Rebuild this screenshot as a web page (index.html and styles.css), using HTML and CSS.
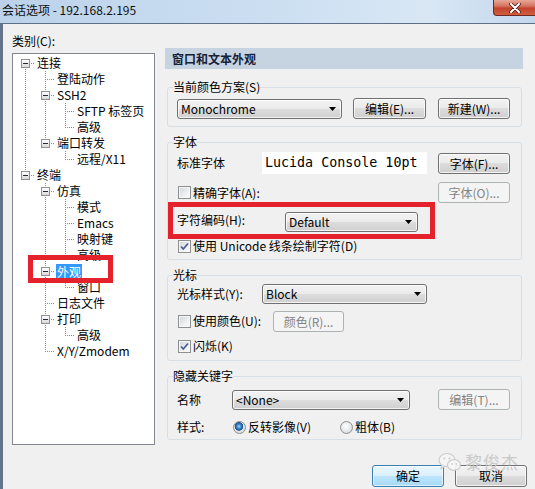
FILE: index.html
```html
<!DOCTYPE html>
<html lang="zh-CN">
<head>
<meta charset="utf-8">
<title>会话选项</title>
<link rel="stylesheet" href="styles.css">
</head>
<body>
<div class="dialog">
  <div class="titlebar">
    <span class="title">会话选项 - 192.168.2.195</span>
    <span class="close"><svg width="12" height="10" viewBox="0 0 12 10"><path d="M2 1 L10 9 M10 1 L2 9" stroke="#4a1e17" stroke-width="3.6" stroke-linecap="round"/><path d="M2 1 L10 9 M10 1 L2 9" stroke="#ffffff" stroke-width="2" stroke-linecap="round"/></svg></span>
  </div>
  <div class="client">
    <div class="main">
      <div class="cats">
        <div class="cats-label">类别(C):</div>
        <div class="tree">
          <div class="row"><span class="g first"><i class="exp"></i></span><span class="lbl">连接</span></div>
          <div class="row"><span class="g pipe"></span><span class="g tee"></span><span class="lbl">登陆动作</span></div>
          <div class="row"><span class="g pipe"></span><span class="g tee"><i class="exp"></i></span><span class="lbl">SSH2</span></div>
          <div class="row"><span class="g pipe"></span><span class="g pipe"></span><span class="g tee"></span><span class="lbl">SFTP 标签页</span></div>
          <div class="row"><span class="g pipe"></span><span class="g pipe"></span><span class="g elbow"></span><span class="lbl">高级</span></div>
          <div class="row"><span class="g pipe"></span><span class="g elbow"><i class="exp"></i></span><span class="lbl">端口转发</span></div>
          <div class="row"><span class="g pipe"></span><span class="g"></span><span class="g elbow"></span><span class="lbl">远程/X11</span></div>
          <div class="row"><span class="g elbow"><i class="exp"></i></span><span class="lbl">终端</span></div>
          <div class="row"><span class="g"></span><span class="g tee"><i class="exp"></i></span><span class="lbl">仿真</span></div>
          <div class="row"><span class="g"></span><span class="g pipe"></span><span class="g tee"></span><span class="lbl">模式</span></div>
          <div class="row"><span class="g"></span><span class="g pipe"></span><span class="g tee"></span><span class="lbl">Emacs</span></div>
          <div class="row"><span class="g"></span><span class="g pipe"></span><span class="g tee"></span><span class="lbl">映射键</span></div>
          <div class="row"><span class="g"></span><span class="g pipe"></span><span class="g elbow"></span><span class="lbl">高级</span></div>
          <div class="row marked"><span class="g"></span><span class="g tee"><i class="exp"></i></span><span class="lbl sel">外观</span><span class="mark"></span></div>
          <div class="row"><span class="g"></span><span class="g pipe"></span><span class="g elbow"></span><span class="lbl">窗口</span></div>
          <div class="row"><span class="g"></span><span class="g tee"></span><span class="lbl">日志文件</span></div>
          <div class="row"><span class="g"></span><span class="g tee"><i class="exp"></i></span><span class="lbl">打印</span></div>
          <div class="row"><span class="g"></span><span class="g pipe"></span><span class="g elbow"></span><span class="lbl">高级</span></div>
          <div class="row"><span class="g"></span><span class="g elbow"></span><span class="lbl">X/Y/Zmodem</span></div>
        </div>
      </div>

      <div class="page">
        <div class="page-head">窗口和文本外观</div>

        <fieldset class="grp g1">
          <legend>当前颜色方案(S)</legend>
          <div class="gb gb1">
            <div class="line">
              <div class="combo w165"><span>Monochrome</span><svg width="7" height="4" viewBox="0 0 7 4"><path d="M0 0H7L3.5 4Z" fill="#000"/></svg></div>
              <button class="btn w73 ml11">编辑(E)...</button>
              <button class="btn w72 push">新建(W)...</button>
            </div>
          </div>
        </fieldset>

        <fieldset class="grp">
          <legend>字体</legend>
          <div class="gb gb2">
            <div class="line h22">
              <span class="lab w85">标准字体</span>
              <span class="preview">Lucida Console 10pt</span>
              <button class="btn w72 push">字体(F)...</button>
            </div>
            <div class="line h21 mt8">
              <span class="chk"><span class="cb"></span>精确字体(A):</span>
              <button class="btn dis w72 push" disabled>字体(O)...</button>
            </div>
            <div class="redline">
              <span class="lab w108">字符编码(H):</span>
              <div class="combo w133"><span>Default</span><svg width="7" height="4" viewBox="0 0 7 4"><path d="M0 0H7L3.5 4Z" fill="#000"/></svg></div>
            </div>
            <div class="line h14">
              <span class="chk"><span class="cb on"><svg width="11" height="11" viewBox="0 0 11 11"><path d="M2 5.5 L4.3 8 L9 2.5" fill="none" stroke="#4a5f97" stroke-width="1.8"/></svg></span>使用 Unicode 线条绘制字符(D)</span>
            </div>
          </div>
        </fieldset>

        <fieldset class="grp">
          <legend>光标</legend>
          <div class="gb gb3">
            <div class="line h20">
              <span class="lab w85">光标样式(Y):</span>
              <div class="combo w165"><span>Block</span><svg width="7" height="4" viewBox="0 0 7 4"><path d="M0 0H7L3.5 4Z" fill="#000"/></svg></div>
            </div>
            <div class="line h20 mt7">
              <span class="chk w96"><span class="cb"></span>使用颜色(U):</span>
              <button class="btn dis w71" disabled>颜色(R)...</button>
            </div>
            <div class="line h14 mt8">
              <span class="chk"><span class="cb on"><svg width="11" height="11" viewBox="0 0 11 11"><path d="M2 5.5 L4.3 8 L9 2.5" fill="none" stroke="#4a5f97" stroke-width="1.8"/></svg></span>闪烁(K)</span>
            </div>
          </div>
        </fieldset>

        <fieldset class="grp">
          <legend>隐藏关键字</legend>
          <div class="gb gb4">
            <div class="line h21">
              <span class="lab w55">名称</span>
              <div class="combo w178"><span>&lt;None&gt;</span><svg width="7" height="4" viewBox="0 0 7 4"><path d="M0 0H7L3.5 4Z" fill="#000"/></svg></div>
              <button class="btn dis w72 push" disabled>编辑(T)...</button>
            </div>
            <div class="line h14 mt10">
              <span class="lab w55">样式:</span>
              <span class="opt w107"><span class="rd on"></span>反转影像(V)</span>
              <span class="opt"><span class="rd"></span>粗体(B)</span>
            </div>
          </div>
        </fieldset>
      </div>
    </div>

    <div class="footer">
      <button class="btn def w72">确定</button>
      <button class="btn w72">取消</button>
      <div class="wm">
        <svg width="24" height="20" viewBox="0 0 24 20"><ellipse cx="9" cy="8" rx="8" ry="6.5" fill="#f6f6f6" stroke="#c9c9c9" stroke-width="1.2"/><path d="M4 13 L3 16.5 L7.5 14" fill="#f6f6f6" stroke="#c9c9c9" stroke-width="1.1"/><circle cx="6.2" cy="6.5" r="1.1" fill="#c9c9c9"/><circle cx="11.5" cy="6.5" r="1.1" fill="#c9c9c9"/><ellipse cx="16" cy="13" rx="6.5" ry="5.3" fill="#f8f8f8" stroke="#c9c9c9" stroke-width="1.2"/><circle cx="14" cy="12" r="0.9" fill="#c9c9c9"/><circle cx="18.2" cy="12" r="0.9" fill="#c9c9c9"/></svg>
        <span class="wm-text">黎俊杰</span>
      </div>
    </div>
  </div>
</div>
</body>
</html>
```

FILE: styles.css
```css
* { box-sizing: border-box; }
html, body { margin: 0; padding: 0; }
body {
  width: 535px;
  height: 489px;
  overflow: hidden;
  background: #f0f0f0;
  font-family: "Noto Sans CJK SC", sans-serif;
  font-size: 12px;
  line-height: 16px;
  color: #000;
}
.dialog { display: flex; flex-direction: column; height: 489px; }

/* title bar */
.titlebar {
  flex: none;
  display: flex;
  align-items: flex-start;
  height: 24px;
  border-bottom: 1px solid #5d7088;
  overflow: hidden;
  background: linear-gradient(to right, #bbd2ea 0%, #c6daef 30%, #cde0f2 55%, #d9e7f5 80%, #c3d7ec 100%);
}
.title { padding-left: 2px; line-height: 20px; font-size: 12px; color: #111; }
.close {
  margin-left: auto;
  margin-right: -2px;
  width: 44px;
  height: 16px;
  border: 1px solid #6f2a20;
  border-top: none;
  border-radius: 0 0 0 4px;
  background: linear-gradient(#e8a797 0%, #d67461 40%, #c4432d 55%, #d0603f 100%);
  display: flex;
  align-items: center;
  justify-content: center;
}

.client {
  flex: 1;
  display: flex;
  flex-direction: column;
  border-left: 3px solid #63748a;
  padding: 9px 0 0 9px;
}
.main { display: flex; align-items: flex-start; }

/* category tree */
.cats { width: 143px; flex: none; }
.cats-label { height: 16px; }
.tree {
  margin-top: 4px;
  height: 392px;
  border: 1px solid #828790;
  background: #fff;
  padding: 1px 0 0 2px;
}
.row { display: flex; height: 16px; align-items: center; }
.row.marked { position: relative; }
.g { flex: none; width: 20px; height: 16px; display: flex; align-items: center; }
.pipe {
  background: repeating-linear-gradient(to bottom, #8c8c8c 0 1px, transparent 1px 2px) 10px 0 / 1px 16px no-repeat;
}
.tee {
  background:
    repeating-linear-gradient(to bottom, #8c8c8c 0 1px, transparent 1px 2px) 10px 0 / 1px 16px no-repeat,
    repeating-linear-gradient(to right, #8c8c8c 0 1px, transparent 1px 2px) 12px 8px / 8px 1px no-repeat;
}
.elbow {
  background:
    repeating-linear-gradient(to bottom, #8c8c8c 0 1px, transparent 1px 2px) 10px 0 / 1px 9px no-repeat,
    repeating-linear-gradient(to right, #8c8c8c 0 1px, transparent 1px 2px) 12px 8px / 8px 1px no-repeat;
}
.first {
  background:
    repeating-linear-gradient(to bottom, #8c8c8c 0 1px, transparent 1px 2px) 10px 8px / 1px 8px no-repeat,
    repeating-linear-gradient(to right, #8c8c8c 0 1px, transparent 1px 2px) 12px 8px / 8px 1px no-repeat;
}
.exp {
  margin-left: 6px;
  width: 9px;
  height: 9px;
  border: 1px solid #919191;
  background:
    linear-gradient(#1e2a3a, #1e2a3a) center / 5px 1px no-repeat,
    linear-gradient(#ffffff, #d9d9d9);
}
.lbl { margin-left: 1px; padding: 0 1px; white-space: nowrap; line-height: 16px; }
.lbl.sel { background: #3399ff; color: #fff; line-height: 15px; height: 15px; }
.mark {
  position: absolute;
  left: 13px;
  top: -8px;
  width: 85px;
  height: 28px;
  border: 5px solid #e3222b;
}

/* right page */
.page { width: 358px; margin: 15px 0 0 10px; }
.page-head {
  height: 21px;
  line-height: 21px;
  padding-left: 7px;
  background: #c6d4e2;
  font-weight: bold;
  color: #15233a;
}
.grp {
  margin: 8px 1px 0 2px;
  padding: 0;
  border: 1px solid #d5dfe5;
  border-radius: 3px;
  min-width: 0;
}
.g1 { margin-top: 11px; }
.grp legend { margin-left: 5px; padding: 0; line-height: 14px; font-size: 12px; }
.gb { padding: 0 11px 0 9px; }
.gb1 { padding-top: 4px; padding-bottom: 7px; }
.gb2 { padding-top: 3px; padding-bottom: 6px; }
.gb3 { padding-top: 2px; padding-bottom: 7px; }
.gb4 { padding-top: 6px; padding-bottom: 5px; }

.line { display: flex; align-items: center; height: 21px; }
.h14 { height: 14px; }
.h20 { height: 20px; }
.h21 { height: 21px; }
.h22 { height: 22px; }
.mt7 { margin-top: 7px; }
.mt8 { margin-top: 8px; }
.mt10 { margin-top: 10px; }
.ml11 { margin-left: 11px; }
.push { margin-left: auto; }

.lab { flex: none; white-space: nowrap; }
.w55 { width: 55px; }
.w71 { width: 71px; }
.w72 { width: 72px; }
.w73 { width: 73px; }
.w85 { width: 85px; }
.w96 { width: 96px; }
.w107 { width: 107px; }
.w108 { width: 108px; }
.w133 { width: 133px; }
.w165 { width: 165px; }
.w178 { width: 178px; }

.redline {
  display: flex;
  align-items: flex-start;
  margin: -1px 0 0 -9px;
  width: 267px;
  height: 37px;
  border: 5px solid #e3222b;
  padding: 5px 0 0 4px;
}

/* controls */
.btn {
  flex: none;
  font: inherit;
  height: 21px;
  padding: 0;
  border: 1px solid #707070;
  border-radius: 3px;
  background: linear-gradient(#f2f2f2 0%, #ebebeb 49%, #dddddd 50%, #cfcfcf 100%);
  box-shadow: inset 0 0 0 1px rgba(255, 255, 255, 0.75);
  color: #000;
  line-height: 19px;
  text-align: center;
}
.btn.dis { border-color: #adb2b5; background: #f4f4f4; color: #838383; box-shadow: none; }
.btn.def {
  border-color: #3c7fb1;
  background: linear-gradient(#eaf6fd 0%, #d9f0fc 49%, #bee6fd 50%, #a7d9f5 100%);
  box-shadow: inset 0 0 0 1px rgba(255, 255, 255, 0.6);
}
.combo {
  flex: none;
  display: flex;
  align-items: center;
  height: 20px;
  border: 1px solid #707070;
  border-radius: 3px;
  background: linear-gradient(#f2f2f2 0%, #ebebeb 49%, #dddddd 50%, #cfcfcf 100%);
  box-shadow: inset 0 0 0 1px rgba(255, 255, 255, 0.75);
  padding: 0 5px 0 3px;
}
.combo span { flex: 1; white-space: nowrap; }
.preview {
  flex: none;
  width: 165px;
  height: 22px;
  background: #fff;
  font-family: "DejaVu Sans Mono", monospace;
  font-size: 13.33px;
  line-height: 22px;
  padding-left: 3px;
  white-space: nowrap;
}
.chk, .opt { display: flex; align-items: center; white-space: nowrap; flex: none; }
.cb {
  flex: none;
  width: 13px;
  height: 13px;
  margin: 0 2px 0 1px;
  border: 1px solid #8e8f8f;
  background: linear-gradient(135deg, #cfd3d8 0%, #eef0f2 60%, #fafafa 100%);
  box-shadow: inset 0 0 0 1px #f6f6f6;
  display: flex;
  align-items: center;
  justify-content: center;
}
.rd {
  flex: none;
  width: 13px;
  height: 13px;
  margin: 0 2px 0 1px;
  border-radius: 50%;
  border: 1px solid #8e8f8f;
  background: radial-gradient(circle at 45% 40%, #ffffff 0, #e4e6e9 55%, #c9ccd1 100%);
}
.rd.on {
  background:
    radial-gradient(circle at 45% 40%, #a9d8f7 0, #3f8ad0 2px, #1d4f96 4px, rgba(0,0,0,0) 4.6px),
    radial-gradient(circle at 45% 40%, #ffffff 0, #e4e6e9 55%, #c9ccd1 100%);
}

/* footer */
.footer {
  position: relative;
  display: flex;
  justify-content: flex-end;
  gap: 11px;
  margin-top: 20px;
  padding-right: 8px;
}
.footer .btn { height: 22px; line-height: 20px; }
.wm {
  position: absolute;
  right: 16px;
  top: -13px;
  display: flex;
  align-items: center;
  gap: 3px;
  opacity: 0.9;
}
.wm-text { font-size: 17px; line-height: 18px; color: #c6c6c6; letter-spacing: 1px; }
```
